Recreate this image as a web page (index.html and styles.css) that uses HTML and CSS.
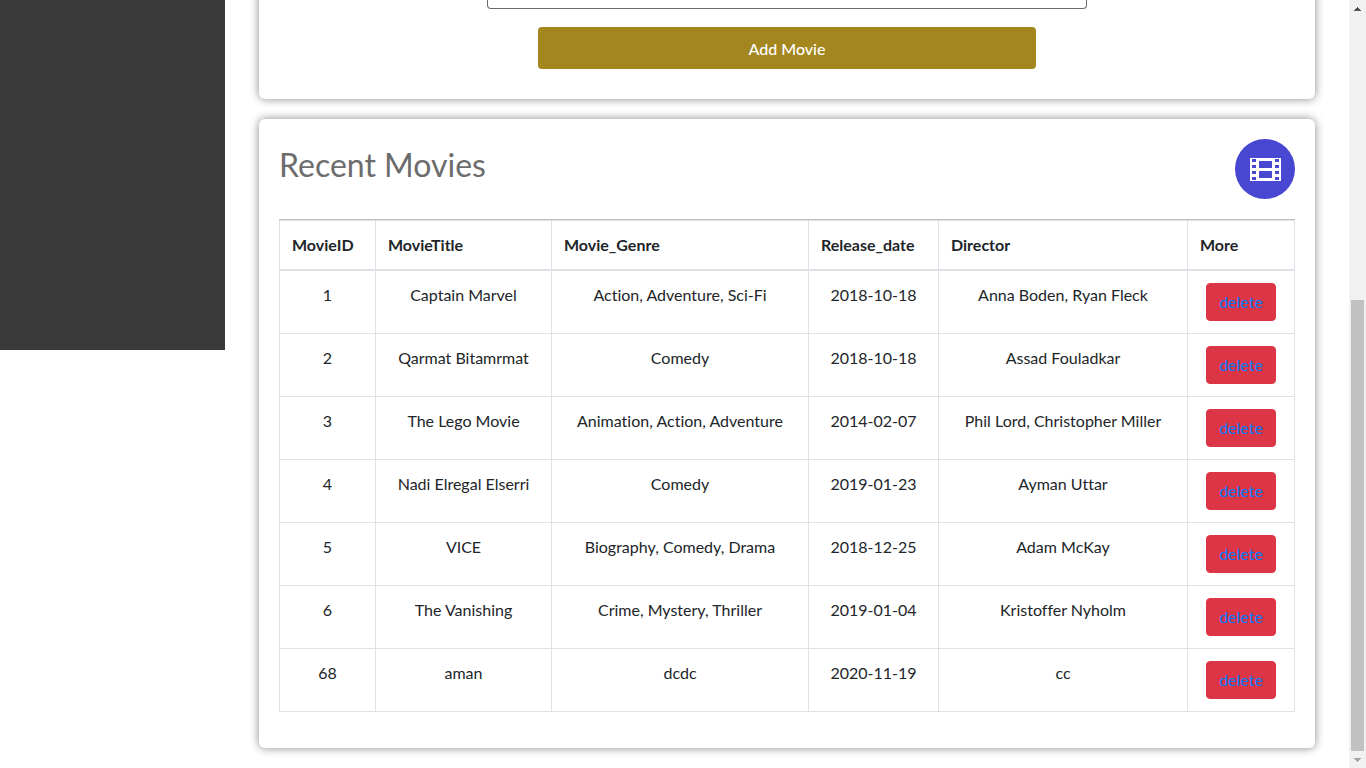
FILE: index.html
```html
<!DOCTYPE html>
<html lang="en">
<head>
<meta charset="utf-8">
<title>Movies Dashboard</title>
<link rel="stylesheet" href="styles.css">
</head>
<body>
<div class="layout">
  <aside class="sidebar"></aside>
  <main class="content">
    <form class="card card-form">
      <input class="field" type="text" aria-label="Movie detail">
      <button class="btn-add" type="button">Add Movie</button>
    </form>
    <section class="card">
      <header class="card-header">
        <h2 class="card-title">Recent Movies</h2>
        <span class="badge">
          <svg class="film" viewBox="0 0 31 23" aria-hidden="true">
            <path fill="#fff" fill-rule="evenodd" d="M0 0h31v23H0zM2 1v3h4V1zM2 7v3h4V7zM2 13v3h4v-3zM2 19v3h4v-3zM25 1v3h4V1zM25 7v3h4V7zM25 13v3h4v-3zM25 19v3h4v-3zM9 3v7h13V3zM9 13v7h13v-7z"/>
          </svg>
        </span>
      </header>
      <table class="movies">
        <colgroup>
          <col class="col-id"><col class="col-title"><col class="col-genre"><col class="col-date"><col class="col-director"><col class="col-more">
        </colgroup>
        <thead>
          <tr><th>MovieID</th><th>MovieTitle</th><th>Movie_Genre</th><th>Release_date</th><th>Director</th><th>More</th></tr>
        </thead>
        <tbody>
          <tr><td>1</td><td>Captain Marvel</td><td>Action, Adventure, Sci-Fi</td><td>2018-10-18</td><td>Anna Boden, Ryan Fleck</td><td><button class="btn-delete" type="button">delete</button></td></tr>
          <tr><td>2</td><td>Qarmat Bitamrmat</td><td>Comedy</td><td>2018-10-18</td><td>Assad Fouladkar</td><td><button class="btn-delete" type="button">delete</button></td></tr>
          <tr><td>3</td><td>The Lego Movie</td><td>Animation, Action, Adventure</td><td>2014-02-07</td><td>Phil Lord, Christopher Miller</td><td><button class="btn-delete" type="button">delete</button></td></tr>
          <tr><td>4</td><td>Nadi Elregal Elserri</td><td>Comedy</td><td>2019-01-23</td><td>Ayman Uttar</td><td><button class="btn-delete" type="button">delete</button></td></tr>
          <tr><td>5</td><td>VICE</td><td>Biography, Comedy, Drama</td><td>2018-12-25</td><td>Adam McKay</td><td><button class="btn-delete" type="button">delete</button></td></tr>
          <tr><td>6</td><td>The Vanishing</td><td>Crime, Mystery, Thriller</td><td>2019-01-04</td><td>Kristoffer Nyholm</td><td><button class="btn-delete" type="button">delete</button></td></tr>
          <tr><td>68</td><td>aman</td><td>dcdc</td><td>2020-11-19</td><td>cc</td><td><button class="btn-delete" type="button">delete</button></td></tr>
        </tbody>
      </table>
    </section>
  </main>
  <div class="scrollbar" aria-hidden="true">
    <span class="scroll-end"><svg width="7" height="4" viewBox="0 0 7 4" shape-rendering="crispEdges"><path fill="#505050" d="M3 0h1v1h1v1h1v1h1v1H0V3h1V2h1V1h1z"/></svg></span>
    <span class="scroll-space"></span>
    <span class="scroll-thumb"></span>
    <span class="scroll-end"><svg width="7" height="4" viewBox="0 0 7 4" shape-rendering="crispEdges"><path fill="#a3a3a3" d="M0 0h7v1H6v1H5v1H4v1H3V3H2V2H1V1H0z"/></svg></span>
  </div>
</div>
</body>
</html>
```
FILE: styles.css
```css
*, *::before, *::after { box-sizing: border-box; }

body {
  margin: 0;
  background: #fff;
  color: #212529;
  font: 400 16px/24px Lato, "Open Sans", sans-serif;
  font-variant-ligatures: none;
}

.layout {
  display: grid;
  grid-template-columns: 225px minmax(0, 1fr) 17px;
  min-height: 100vh;
}

.sidebar {
  height: 350px;
  background: #3a3a3a;
}

.content {
  display: flex;
  flex-direction: column;
  gap: 20px;
  padding: 0 34px 20px;
}

.card {
  padding: 20px;
  border-radius: 6px;
  background: #fff;
  box-shadow: 0 0 10px #888;
}

/* The form's top edge and corners sit above the window. */
.card-form {
  display: flex;
  flex-direction: column;
  align-items: center;
  gap: 18px;
  margin-top: -20px;
  padding: 20px 20px 30px;
}

.field {
  width: 600px;
  max-width: 100%;
  height: 9px;
  padding: 0 12px;
  border: 1px solid #6c6c6c;
  border-top: 0;
  border-radius: 0 0 4px 4px;
  background: #fff;
}

.btn-add {
  width: 49%;
  padding: 10px 12px 8px;
  border: 0;
  border-radius: 4px;
  background: #a3861e;
  color: #fff;
  font: inherit;
  font-weight: 500;
}

.card-header {
  display: flex;
  justify-content: space-between;
  align-items: center;
  padding-bottom: 20px;
  border-bottom: 1px solid #c0c0c0;
}

.card-title {
  margin: 0 0 8px;
  color: #6c6c6c;
  font-size: 32px;
  font-weight: 400;
  line-height: 40px;
}

.badge {
  display: flex;
  align-items: center;
  justify-content: center;
  width: 60px;
  height: 60px;
  border-radius: 50%;
  background: #4747d1;
}

.film {
  width: 31px;
  height: 23px;
}

.movies {
  width: 100%;
  margin-bottom: 16px;
  border-collapse: collapse;
  table-layout: fixed;
  text-align: center;
}

.col-id { width: 96px; }
.col-title { width: 176px; }
.col-genre { width: 257px; }
.col-date { width: 130px; }
.col-director { width: 249px; }
.col-more { width: 107px; }

.movies th,
.movies td {
  padding: 12px;
  border: 1px solid #dee2e6;
  vertical-align: top;
}

.movies th {
  border-bottom-width: 2px;
  font-weight: 700;
  text-align: left;
}

.btn-delete {
  display: inline-block;
  min-width: 70px;
  padding: 6px 12px;
  border: 1px solid #dc3545;
  border-radius: 4px;
  background: #dc3545;
  color: #007bff;
  font: inherit;
  vertical-align: middle;
}

.scrollbar {
  display: flex;
  flex-direction: column;
  background: #f1f1f1;
}

.scroll-end {
  display: flex;
  flex: 0 0 17px;
  align-items: center;
  justify-content: center;
}

.scroll-space { flex: 283; }

.scroll-thumb {
  flex: 451;
  margin: 0 2px;
  background: #c1c1c1;
}
```
